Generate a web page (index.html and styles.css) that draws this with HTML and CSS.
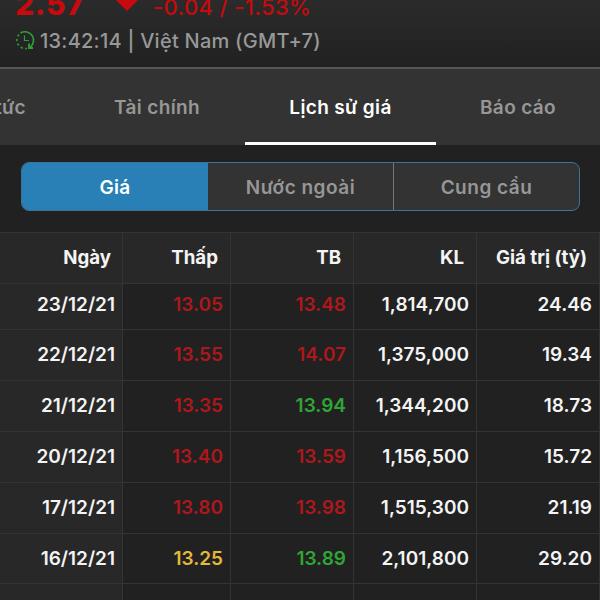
FILE: index.html
```
<!DOCTYPE html>
<html lang="vi">
<head>
	<meta charset="UTF-8">
	<meta content="width=device-width, initial-scale=1.0" name="viewport">
	<title>Lịch sử giá</title>
	<link rel="stylesheet" href="styles.css">
</head>
<body>
<div class="quote">
	<div class="quote-line">
		<span class="last">2.57</span>
		<svg class="arrow" width="26" height="26" viewBox="0 0 26 26"><path d="M9 0h8v12h8L13 24 1 12h8z" fill="#c60a0e"/></svg>
		<span class="change">-0.04 / -1.53%</span>
	</div>
	<div class="clock-line">
		<svg class="clock" width="20" height="22" viewBox="0 0 20 22" fill="none" stroke="#2f9e35" stroke-width="1.6">
			<path d="M5.5 3A8.5 8.5 0 0 1 14.5 17.5"/>
			<path d="M4 4.5A8.5 8.5 0 0 0 12 18.5" stroke-dasharray="2.2 2.6"/>
			<path d="M9.5 5.5v5H14" stroke-width="1.2"/>
			<path d="M14 13.5v4.500h4" stroke-width="1.8"/>
		</svg>
		<span class="time">13:42:14 | Việt Nam (GMT+7)</span>
	</div>
</div>

<div class="tabs">
	<div class="tab news"><span>Tin tức</span></div>
	<div class="tab"><span>Tài chính</span></div>
	<div class="tab active"><span>Lịch sử giá</span></div>
	<div class="tab"><span>Báo cáo</span></div>
</div>

<div class="segments">
	<div class="segment on">Giá</div>
	<div class="segment">Nước ngoài</div>
	<div class="segment">Cung cầu</div>
</div>

<table class="prices">
	<colgroup><col class="c1"><col class="c2"><col class="c3"><col class="c4"><col class="c5"></colgroup>
	<thead>
		<tr><th>Ngày</th><th>Thấp</th><th>TB</th><th>KL</th><th>Giá trị (tỷ)</th></tr>
	</thead>
	<tbody>
		<tr class="first"><td>23/12/21</td><td class="down">13.05</td><td class="down">13.48</td><td>1,814,700</td><td>24.46</td></tr>
		<tr><td>22/12/21</td><td class="down">13.55</td><td class="down">14.07</td><td>1,375,000</td><td>19.34</td></tr>
		<tr><td>21/12/21</td><td class="down">13.35</td><td class="up">13.94</td><td>1,344,200</td><td>18.73</td></tr>
		<tr><td>20/12/21</td><td class="down">13.40</td><td class="down">13.59</td><td>1,156,500</td><td>15.72</td></tr>
		<tr><td>17/12/21</td><td class="down">13.80</td><td class="down">13.98</td><td>1,515,300</td><td>21.19</td></tr>
		<tr class="short"><td>16/12/21</td><td class="ref">13.25</td><td class="up">13.89</td><td>2,101,800</td><td>29.20</td></tr>
		<tr class="last-row"><td></td><td></td><td></td><td></td><td></td></tr>
	</tbody>
</table>
</body>
</html>
```
FILE: styles.css
```
* {
	box-sizing: border-box;
}
body {
	margin: 0;
	width: 600px;
	height: 600px;
	overflow: hidden;
	background: #212121;
	color: #f4f4f4;
	font-family: Inter, "Liberation Sans", sans-serif;
	font-size: 19px;
	font-weight: 600;
	white-space: nowrap;
}

/* quote header, scrolled partly off the top */
.quote {
	height: 69px;
	overflow: hidden;
	background: linear-gradient(#2b2b2b, #212121);
	border-bottom: 2px solid #555;
	padding-left: 15px;
}
.quote-line {
	display: flex;
	height: 40px;
	margin-top: -16px;
	line-height: 40px;
	color: #c60a0e;
}
.last {
	width: 99px;
	font-size: 30px;
	font-weight: 800;
	letter-spacing: 0.7px;
}
.arrow {
	width: 26px;
	margin-top: 3px;
}
.change {
	margin-left: 13px;
	font-size: 22px;
	font-weight: 500;
	line-height: 46px;
	letter-spacing: 0.35px;
}
.clock-line {
	display: flex;
	align-items: center;
	margin-top: 5px;
	height: 24px;
	color: #989898;
}
.time {
	margin-left: 5px;
	font-size: 20px;
	font-weight: 500;
	letter-spacing: 0.25px;
}

.tabs {
	display: grid;
	grid-template-columns: 69px 176px 191px 164px;
	grid-template-rows: 76px;
	height: 76px;
	background: #333;
	color: #979797;
	letter-spacing: 0.35px;
}
.tab {
	display: flex;
	justify-content: center;
	line-height: 77px;
}
.tab.news {
	justify-content: flex-end;
	padding-right: 43px;
}
.tab.active {
	height: 76px;
	color: #fff;
	border-bottom: 3px solid #fff;
}

.segments {
	display: grid;
	grid-template-columns: 186px 185px 1fr;
	height: 49px;
	margin: 17px 20px 21px 21px;
	overflow: hidden;
	background: #333;
	border: 1px solid #3a7498;
	border-radius: 8px;
	color: #979797;
	line-height: 50px;
	letter-spacing: 0.5px;
	text-align: center;
}
.segment + .segment + .segment {
	border-left: 1px solid #777;
}
.segment.on {
	background: #2980b6;
	color: #fff;
	letter-spacing: 0.3px;
}

.prices {
	width: 600px;
	table-layout: fixed;
	border-collapse: separate;
	border-spacing: 0;
	border-top: 1px solid #343434;
}
.c1 { width: 123px; }
.c2 { width: 108px; }
.c3 { width: 123px; }
.c4 { width: 123px; }
.c5 { width: 123px; }
.prices th,
.prices td {
	height: 51px;
	padding: 0 7px 0 0;
	border-right: 1px solid #343434;
	border-bottom: 1px solid #343434;
	text-align: right;
	line-height: 24px;
}
.prices th {
	padding: 0 12px 1px 0;
	background: #282828;
	font-size: 18.7px;
}
.prices th:first-child {
	padding-right: 11px;
}
.prices td:first-child {
	background: #282828;
}
.prices .first td {
	height: 46px;
	padding-bottom: 3px;
}
.prices .short td {
	height: 50px;
}
.prices .last-row td {
	height: 16px;
	border-bottom: 0;
}
.prices .down { color: #ae171b; }
.prices .up { color: #2fa536; }
.prices .ref { color: #e5b73a; }
```
